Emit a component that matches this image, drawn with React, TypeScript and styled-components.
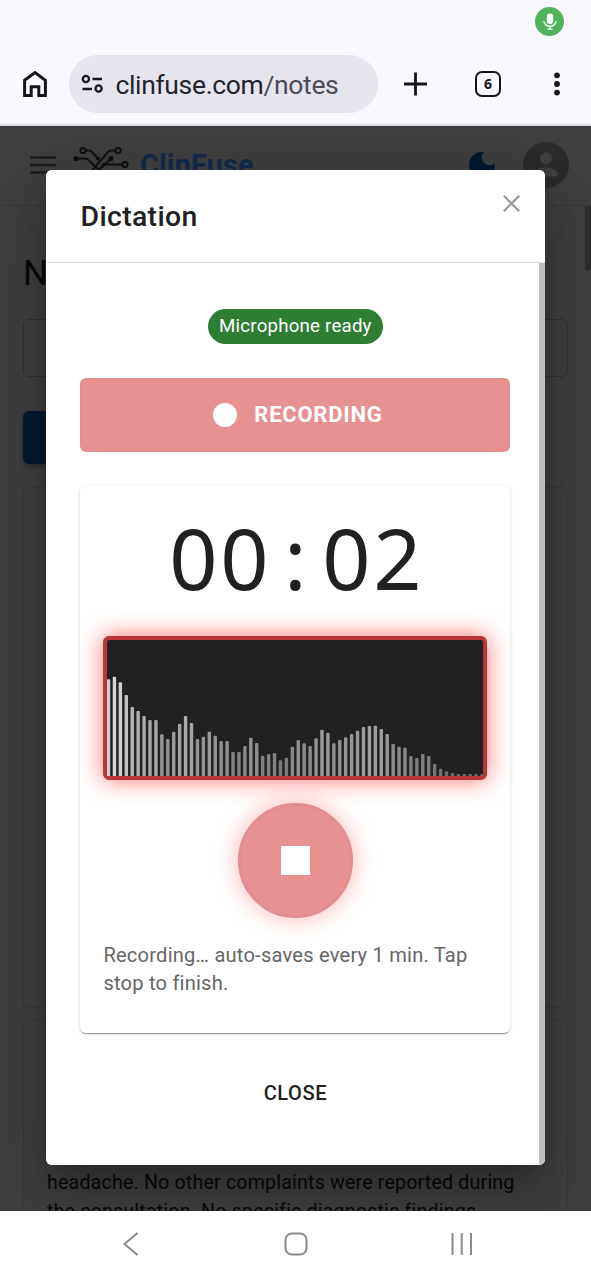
import React from 'react';
import styled, { createGlobalStyle } from 'styled-components';

const GlobalStyle = createGlobalStyle`
  * { box-sizing: border-box; }
  body { margin: 0; background: #fff; font-family: Roboto, "Liberation Sans", sans-serif; }
  button { font: inherit; border: 0; padding: 0; background: none; color: inherit; }
  svg { display: block; flex: none; }
`;

const Screen = styled.div`
  width: 591px;
  height: 1280px;
  display: flex;
  flex-direction: column;
  overflow: hidden;
`;

const BrowserChrome = styled.header`
  height: 126px;
  background: #f9f8fe;
  border-bottom: 2px solid #dddce3;
  flex: none;
`;

const StatusBar = styled.div`
  height: 43px;
  padding: 7px 27px 0 0;
  display: flex;
  justify-content: flex-end;
`;

const MicBadge = styled.div`
  width: 29px;
  height: 29px;
  border-radius: 50%;
  background: #4fb45b;
  display: flex;
  align-items: center;
  justify-content: center;
`;

const Toolbar = styled.div`
  height: 82px;
  display: flex;
  align-items: center;
  padding-left: 22px;
  color: #15161c;
`;

const AddressBar = styled.div`
  width: 309px;
  height: 58px;
  margin: 0 25px 0 21px;
  padding-left: 12px;
  border-radius: 29px;
  background: #e6e5ed;
  display: flex;
  align-items: center;
  gap: 11.500px;
`;

const Url = styled.span`
  font-size: 26.5px;
  letter-spacing: -0.35px;
  line-height: 32px;
  padding-top: 1px;
  white-space: nowrap;
  color: #22232b;
`;

const UrlPath = styled.span`
  color: #4a4a54;
`;

const TabCount = styled.div`
  width: 26px;
  height: 26px;
  margin: 0 53px 0 48px;
  border: 2.6px solid #15161c;
  border-radius: 7px;
  display: flex;
  align-items: center;
  justify-content: center;
  font: 700 14px/20px "Open Sans", sans-serif;
`;

const Viewport = styled.main`
  flex: 1;
  position: relative;
  overflow: hidden;
  background: #3f3f3f;
  color: #090909;
`;

const AppBar = styled.div`
  height: 80px;
  padding: 0 22px 2px 30px;
  border-bottom: 1px solid #383838;
  display: flex;
  align-items: center;
`;

const Brand = styled.span`
  margin-left: 11px;
  flex: 1;
  font-size: 28.8px;
  font-weight: 700;
  line-height: 40px;
  letter-spacing: 0.2px;
  color: #142a49;
`;

const Avatar = styled.div`
  width: 46px;
  height: 46px;
  margin-left: 27px;
  border-radius: 50%;
  background: #2b2b2b;
  overflow: hidden;
`;

const PageBody = styled.div`
  padding: 45px 23px 0;
`;

const PageTitle = styled.h1`
  margin: 0 0 22px;
  font-size: 35px;
  font-weight: 400;
  line-height: 46px;
`;

const SearchField = styled.div`
  height: 58px;
  border: 1px solid #323232;
  border-radius: 6px;
`;

const PrimaryAction = styled.div`
  width: 200px;
  height: 53px;
  margin: 34px 0 23px;
  border-radius: 6px;
  background: #061a31;
  box-shadow: 0 2px 5px rgba(0, 0, 0, 0.3);
`;

const NoteCard = styled.article<{ $height: number }>`
  height: ${({ $height }) => $height}px;
  margin-bottom: 12px;
  padding: 0 23px;
  display: flex;
  flex-direction: column;
  border: 1px solid #383838;
  border-radius: 6px;
`;

const NoteText = styled.p`
  margin: 148px 0 0;
  font-size: 19.6px;
  line-height: 28.8px;
  letter-spacing: 0.19px;
  white-space: nowrap;
`;

const PageScrollbar = styled.div`
  position: absolute;
  top: 80px;
  right: 0;
  width: 6px;
  height: 64px;
  background: #2c2c2c;
`;

const Dialog = styled.section`
  position: absolute;
  left: 46px;
  top: 44px;
  width: 499px;
  height: 995px;
  border-radius: 6px;
  background: #fff;
  color: #212121;
  overflow: hidden;
  display: flex;
  flex-direction: column;
`;

const DialogShadow = styled(Dialog)`
  overflow: visible;
  box-shadow: 0 16px 22px -10px rgba(0, 0, 0, 0.2), 0 34px 55px 4px rgba(0, 0, 0, 0.14),
    0 13px 66px 12px rgba(0, 0, 0, 0.12);
`;

const DialogHeader = styled.div`
  height: 93px;
  flex: none;
  padding: 0 25px 0 34.5px;
  border-bottom: 1px solid #dedede;
  display: flex;
  justify-content: space-between;
`;

const DialogTitle = styled.h2`
  margin: 24px 0 0;
  font-size: 28.4px;
  font-weight: 500;
  line-height: 46px;
  letter-spacing: 0.35px;
`;

const CloseIcon = styled.button`
  width: 17px;
  height: 17px;
  margin-top: 25px;
`;

const DialogBody = styled.div`
  flex: 1;
  padding: 46px 28.600px 0 34.400px;
  border-right: 6px solid #c0c0c0;
  display: flex;
  flex-direction: column;
  align-items: center;
`;

const StatusChip = styled.span`
  width: 175px;
  height: 35px;
  border-radius: 18px;
  background: #2e7d32;
  color: #fff;
  font-size: 18.7px;
  letter-spacing: 0.2px;
  line-height: 34px;
  text-align: center;
  white-space: nowrap;
`;

const RecordingButton = styled.button`
  width: 430px;
  height: 74px;
  margin: 34px 0;
  border: 2px solid #e08e8f;
  border-radius: 6px;
  background: #e79290;
  color: #fff;
  display: flex;
  align-items: center;
  justify-content: center;
  gap: 17px;
  font-size: 22px;
  font-weight: 700;
  line-height: 26px;
  letter-spacing: 0.75px;
  padding-left: 5px;
`;

const RecordDot = styled.span`
  width: 24px;
  height: 24px;
  border-radius: 50%;
  background: #fff;
`;

const RecorderCard = styled.div`
  width: 430px;
  height: 547px;
  padding: 23px;
  border-radius: 6px;
  box-shadow: 0 3px 1px -2px rgba(0, 0, 0, 0.2), 0 1px 1px rgba(0, 0, 0, 0.2), 0 1px 4px rgba(0, 0, 0, 0.12);
  display: flex;
  flex-direction: column;
  align-items: center;
`;

const Timer = styled.div`
  height: 103px;
  margin: 0 0 24px;
  display: flex;
  font-family: "Noto Sans", sans-serif;
  font-size: 84.5px;
  line-height: 98px;
`;

const TimerChar = styled.span`
  width: 51px;
  text-align: center;
`;

const WaveFrame = styled.div`
  width: 384px;
  height: 144px;
  flex: none;
  border: 4px solid #b93638;
  border-radius: 6px;
  background: #212121;
  box-shadow: 0 0 23px rgba(255, 30, 20, 0.62);
`;

const StopButton = styled.button`
  width: 115px;
  height: 115px;
  flex: none;
  margin: 23px 0;
  border: 3px solid #e08e8f;
  border-radius: 50%;
  background: #e79290;
  box-shadow: 0 0 23px rgba(255, 60, 50, 0.38);
  display: flex;
  align-items: center;
  justify-content: center;
`;

const StopSquare = styled.span`
  width: 29px;
  height: 29px;
  background: #fff;
`;

const Hint = styled.p`
  margin: 0;
  align-self: stretch;
  font-size: 20.1px;
  line-height: 28.3px;
  letter-spacing: 0.215px;
  color: #666;
`;

const CloseButton = styled.button`
  margin-top: 43px;
  font-size: 20.1px;
  font-weight: 500;
  line-height: 35px;
  letter-spacing: 0.57px;
`;

const NavBar = styled.nav`
  height: 69px;
  flex: none;
  background: #fff;
  display: flex;
  align-items: center;
  justify-content: space-between;
  padding: 0 118px 3px 122px;
`;

const levels = [
  96.7, 99.3, 93.7, 81, 69, 65, 60, 56, 56, 41.7, 37, 44.3, 52.3, 60, 53, 37, 39.3, 44.3, 40.3, 35, 35, 24,
  24, 30, 38.3, 33, 20.3, 22, 23, 15.7, 18.3, 29.3, 36, 32.7, 30, 37.7, 46.3, 43.3, 32.7, 36, 38.7, 42, 45.3,
  49, 50, 50.3, 47, 42, 32, 29.3, 28.3, 20, 18, 22, 20, 12, 7.3, 4.7, 3, 2, 2, 2, 2, 2,
];

const Waveform = () => (
  <svg width="376" height="136" viewBox="0 0 376 136">
    {levels.map((h, i) => {
      const g = Math.round(105 + h * 1.1);
      return <rect key={i} x={i * 5.93 - 0.2} y={136 - h} width={3.4} height={h + 2} rx={1} fill={`rgb(${g},${g},${g})`} />;
    })}
  </svg>
);

const MicIcon = () => (
  <svg width="16" height="18" viewBox="0 0 16 18" fill="none">
    <rect x="4.8" y="0.5" width="6.4" height="10.5" rx="3.2" fill="#fff" />
    <path d="M2 8.3a6 5 0 0 0 12 0M8 13.5v2M5.5 16.3h5" stroke="#effff0" strokeWidth="1.5" />
  </svg>
);

const HomeIcon = () => (
  <svg width="26" height="28" viewBox="0 0 26 28" fill="none" stroke="currentColor" strokeWidth="3">
    <path d="M2.6 10.3 13 2.6l10.4 7.7v15.2h-6.6v-8.8H9.2v8.8H2.6z" />
  </svg>
);

const SiteSettingsIcon = () => (
  <svg width="23" height="20" viewBox="0 0 23 20" fill="none" stroke="currentColor" strokeWidth="2.3">
    <circle cx="4.9" cy="5" r="3.1" />
    <path d="M11.5 5H21M1.5 15H11" />
    <circle cx="17.6" cy="14.5" r="3.1" />
  </svg>
);

const PlusIcon = () => (
  <svg width="24" height="24" viewBox="0 0 24 24" stroke="currentColor" strokeWidth="2.8">
    <path d="M12.500 .5v23M1 12h23" />
  </svg>
);

const MoreIcon = () => (
  <svg width="6" height="24" viewBox="0 0 6 24" fill="currentColor">
    <circle cx="3" cy="3.3" r="2.9" />
    <circle cx="3" cy="12" r="2.9" />
    <circle cx="3" cy="20.6" r="2.9" />
  </svg>
);

const MenuIcon = () => (
  <svg width="26" height="20" viewBox="0 0 26 20" stroke="#1c1c1c" strokeWidth="2.5">
    <path d="M0 2.5h26M0 10h26M0 17.5h26" />
  </svg>
);

const LogoSvg = styled.svg`
  margin-left: 17px;
`;

const LogoIcon = () => (
  <LogoSvg width="56" height="38" viewBox="0 0 56 38" fill="none" stroke="#111" strokeWidth="2">
    <circle cx="10" cy="4.500" r="2.6" />
    <circle cx="45" cy="4.500" r="2.6" />
    <circle cx="52" cy="18.500" r="2.6" />
    <circle cx="3" cy="12.500" r="1.6" fill="#111" />
    <circle cx="38" cy="12.5" r="1.6" fill="#111" />
    <circle cx="25" cy="12.500" r="1" fill="#111" />
    <circle cx="31" cy="18.500" r="1" fill="#111" />
    <path d="M13 4.500h3.500q1.500 0 2.500 1.500L25 12.500M42 4.500h-4q-2 0-3.500 2L17 27M4 12.500h8q2 0 3.500 1.500L31 29M38 12.500 26 24M49 18.500H31l-5 5" />
  </LogoSvg>
);

const MoonIcon = () => (
  <svg width="28" height="28" viewBox="0 0 28 28" fill="#04192f">
    <path d="M14 1A13 13 0 1 0 27 14q0-1-.2-2A7.5 7.5 0 1 1 16 1.200Q15 1 14 1z" />
  </svg>
);

const PersonIcon = () => (
  <svg width="46" height="46" viewBox="0 0 46 46" fill="#404040">
    <circle cx="23" cy="16.500" r="6" />
    <path d="M11.500 34.500v-3c0-4 7.500-6 11.500-6s11.500 2 11.500 6v3z" />
  </svg>
);

export default function App() {
  return (
    <Screen>
      <GlobalStyle />
      <BrowserChrome>
        <StatusBar>
          <MicBadge>
            <MicIcon />
          </MicBadge>
        </StatusBar>
        <Toolbar>
          <HomeIcon />
          <AddressBar>
            <SiteSettingsIcon />
            <Url>
              clinfuse.com<UrlPath>/notes</UrlPath>
            </Url>
          </AddressBar>
          <PlusIcon />
          <TabCount>6</TabCount>
          <MoreIcon />
        </Toolbar>
      </BrowserChrome>
      <Viewport>
        <AppBar>
          <MenuIcon />
          <LogoIcon />
          <Brand>ClinFuse</Brand>
          <MoonIcon />
          <Avatar>
            <PersonIcon />
          </Avatar>
        </AppBar>
        <PageBody>
          <PageTitle>N</PageTitle>
          <SearchField />
          <PrimaryAction />
          <NoteCard $height={521} />
          <NoteCard $height={300}>
            <NoteText>
              headache. No other complaints were reported during
              <br />
              the consultation. No specific diagnostic findings
            </NoteText>
          </NoteCard>
        </PageBody>
        <PageScrollbar />
        <DialogShadow as="div" />
        <Dialog role="dialog">
          <DialogHeader>
            <DialogTitle>Dictation</DialogTitle>
            <CloseIcon aria-label="Close dialog">
              <svg width="17" height="17" viewBox="0 0 17 17" stroke="#979797" strokeWidth="2.2">
                <path d="m.8.8 15.400 15.400M16.200.8.8 16.200" />
              </svg>
            </CloseIcon>
          </DialogHeader>
          <DialogBody>
            <StatusChip>Microphone ready</StatusChip>
            <RecordingButton>
              <RecordDot />
              RECORDING
            </RecordingButton>
            <RecorderCard>
              <Timer>
                {'00:02'.split('').map((c, i) => (
                  <TimerChar key={i}>{c}</TimerChar>
                ))}
              </Timer>
              <WaveFrame>
                <Waveform />
              </WaveFrame>
              <StopButton aria-label="Stop">
                <StopSquare />
              </StopButton>
              <Hint>Recording… auto-saves every 1 min. Tap stop to finish.</Hint>
            </RecorderCard>
            <CloseButton>CLOSE</CloseButton>
          </DialogBody>
        </Dialog>
      </Viewport>
      <NavBar>
        <svg width="18" height="26" viewBox="0 0 18 26" fill="none" stroke="#8a8a8a" strokeWidth="2">
          <path d="M15.500 2 2.500 13l13 11" />
        </svg>
        <svg width="24" height="24" viewBox="0 0 24 24" fill="none" stroke="#8a8a8a" strokeWidth="2">
          <rect x="1.500" y="1.500" width="21" height="21" rx="6.500" />
        </svg>
        <svg width="22" height="22" viewBox="0 0 22 22" stroke="#8a8a8a" strokeWidth="2">
          <path d="M1.500 0v22M10.700 0v22M20 0v22" />
        </svg>
      </NavBar>
    </Screen>
  );
}
